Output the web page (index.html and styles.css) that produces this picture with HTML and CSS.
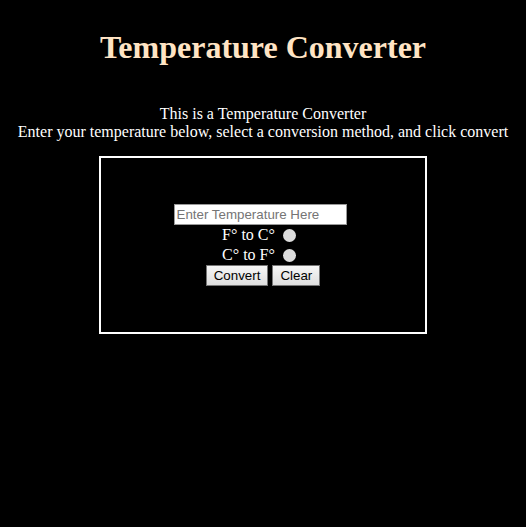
FILE: index.html
```html
<!DOCTYPE html>
<html>
<head>
<meta charset="utf-8">
<link rel="stylesheet" href="styles.css">
</head>
<body>
<h1 class="title">Temperature Converter</h1>
<p class="intro">This is a Temperature Converter<br>Enter your temperature below, select a conversion method, and click convert</p>
<form class="box">
  <input class="temp" type="text" placeholder="Enter Temperature Here">
  <label class="opt">F° to C° <span class="radio"></span></label>
  <label class="opt">C° to F° <span class="radio"></span></label>
  <div class="btns">
    <button type="button" class="btn">Convert</button>
    <button type="button" class="btn">Clear</button>
  </div>
</form>
</body>
</html>
```
FILE: styles.css
```css
html, body { background: #000; }
body {
  margin: 8px;
  font-family: "Liberation Serif", "Times New Roman", serif;
  color: #fff;
}
.title {
  margin: 21px 0 0;
  text-align: center;
  font-size: 32px;
  font-weight: bold;
  color: #ffe4c4;
}
.intro {
  margin: 39px 0 0;
  text-align: center;
  font-size: 16px;
  line-height: 18px;
}
.box {
  width: 324px;
  height: 174px;
  margin: 15px auto 0;
  border: 2px solid #fff;
  display: flex;
  flex-direction: column;
  align-items: center;
  justify-content: center;
  box-sizing: content-box;
}
.temp {
  box-sizing: border-box;
  width: 173px;
  height: 21px;
  padding: 1px 2px;
  border: 1px solid #999;
  font-family: "Liberation Sans", Arial, sans-serif;
  font-size: 13.333px;
  color: #000;
  background: #fff;
  margin: 0 6px 0 0;
  outline: none;
}
.temp::placeholder { color: #757575; }
.opt {
  display: flex;
  align-items: center;
  font-size: 16px;
  line-height: 18px;
  height: 20px;
  margin-right: 8px;
}
.radio {
  display: inline-block;
  width: 13px;
  height: 13px;
  border-radius: 50%;
  background: #dcdcdc;
  margin: 0 0 0 8px;
}
.btns {
  display: flex;
  gap: 4px;
}
.btn {
  font-family: "Liberation Sans", Arial, sans-serif;
  font-size: 13.333px;
  height: 21px;
  padding: 0 7px;
  border: 1px solid #767676;
  border-radius: 0;
  background: linear-gradient(#f6f6f6, #dedede);
  color: #000;
}
```
